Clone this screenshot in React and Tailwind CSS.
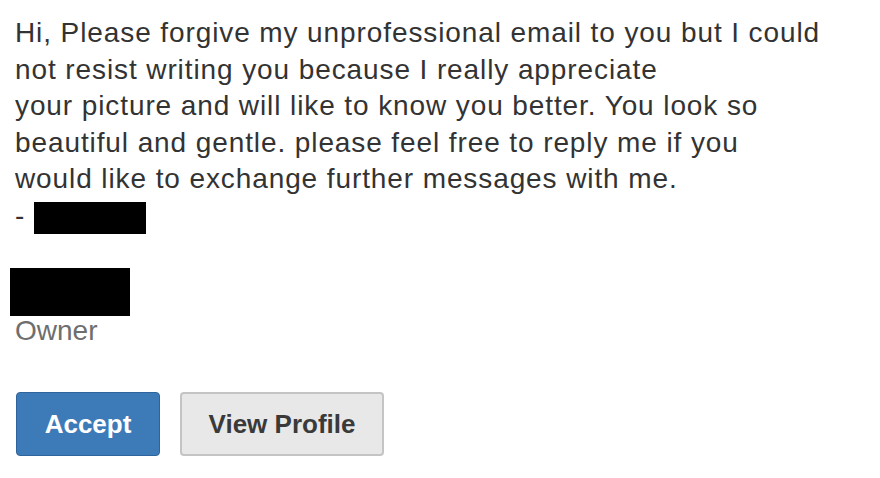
export default function App() {
  const lines = [
    'Hi, Please forgive my unprofessional email to you but I could',
    'not resist writing you because I really appreciate',
    'your picture and will like to know you better. You look so',
    'beautiful and gentle. please feel free to reply me if you',
    'would like to exchange further messages with me.',
  ]

  return (
    <div className="h-[478px] w-[880px] bg-white font-['Liberation_Sans',Arial,sans-serif]">
      <div className="pl-[15px] pt-[15px] text-[28px] leading-[36.5px] tracking-[0.9px] text-[#333333]">
        {lines.map((line) => (
          <div key={line}>{line}</div>
        ))}
        <div className="flex items-center gap-[9px]">
          <span>-</span>
          <span className="mt-[4px] h-[32px] w-[112px] bg-black" />
        </div>
      </div>

      <div className="mt-[34px] pl-[10px]">
        <div className="h-[48px] w-[120px] bg-black" />
        <div className="pl-[5px] text-[28px] leading-[30px] text-[#6e6e6e]">Owner</div>
      </div>

      <div className="mt-[46px] flex gap-[20px] pl-[16px]">
        <button
          type="button"
          className="h-[64px] w-[144px] rounded-[4px] border border-[#2e649b] bg-[#3d7ab8] text-[26px] font-bold text-white"
        >
          Accept
        </button>
        <button
          type="button"
          className="h-[64px] w-[204px] rounded-[4px] border-2 border-[#c4c4c4] bg-[#e8e8e8] text-[26px] font-bold text-[#3a3a3a]"
        >
          View Profile
        </button>
      </div>
    </div>
  )
}
